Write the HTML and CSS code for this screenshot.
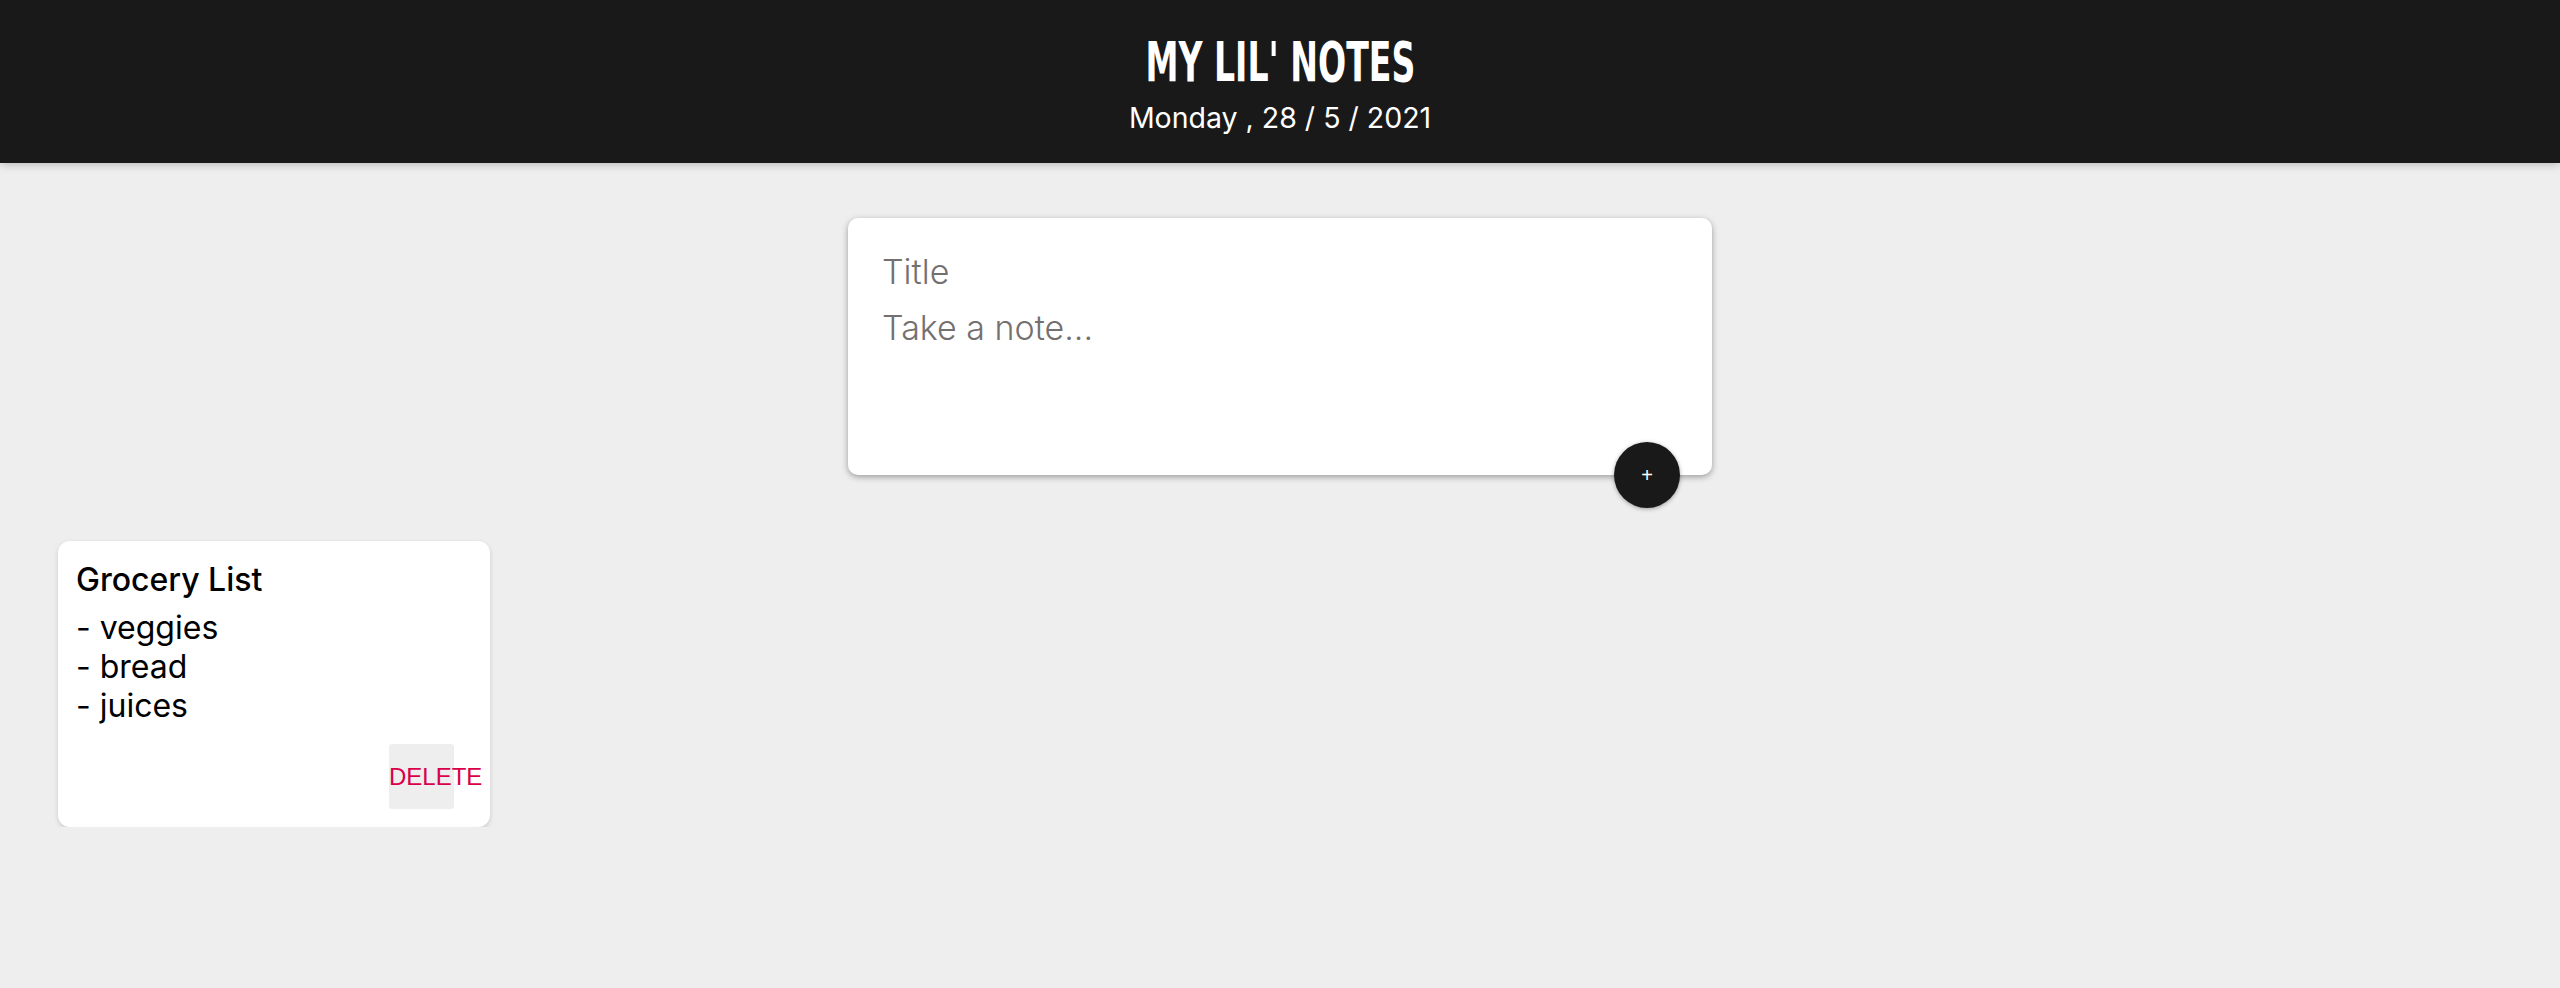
FILE: index.html
```html
<!DOCTYPE html>
<html lang="en">
<head>
<meta charset="utf-8">
<title>My Lil' Notes</title>
<link rel="stylesheet" href="styles.css">
</head>
<body>
<header class="header">
  <h1 class="brand"><span class="brand-text">MY LIL' NOTES</span></h1>
  <p class="date">Monday , 28 / 5 / 2021</p>
</header>
<main class="main">
  <form class="create-note">
    <input class="create-title" type="text" name="title" placeholder="Title">
    <textarea class="create-content" name="content" rows="3" placeholder="Take a note..."></textarea>
    <button class="add-btn" type="button">+</button>
  </form>
  <section class="notes">
    <article class="note">
      <h2 class="note-title">Grocery List</h2>
      <p class="note-body">- veggies<br>- bread<br>- juices</p>
      <div class="note-actions">
        <button class="delete-btn" type="button">DELETE</button>
      </div>
    </article>
  </section>
</main>
</body>
</html>
```
FILE: styles.css
```css
* { box-sizing: border-box; }
html, body { margin: 0; padding: 0; }
body {
  background: #eeeeee;
  font-family: Inter, "Open Sans", sans-serif;
}
.header {
  height: 163px;
  background: #191919;
  box-shadow: 0 0 10px rgba(0,0,0,0.3);
  display: flex;
  flex-direction: column;
  align-items: center;
  color: #fff;
  padding-top: 32px;
}
.brand {
  margin: 0;
  font-family: "DejaVu Sans Condensed", sans-serif;
  font-weight: 700;
  font-size: 55px;
  line-height: 60px;
  letter-spacing: 0;
}
.brand-text { display: inline-block; transform: scaleX(0.67); }
.date {
  margin: 9px 0 0;
  font-size: 28.5px;
  line-height: 34px;
  font-weight: 400;
}
.main { padding: 55px 0 0; }
.create-note {
  position: relative;
  width: 864px;
  height: 257px;
  margin: 0 auto;
  background: #fff;
  border-radius: 10px;
  box-shadow: 0 2px 6px rgba(0,0,0,0.35);
  padding: 27px 34px 0;
  display: flex;
  flex-direction: column;
}
.create-title, .create-content {
  border: none;
  outline: none;
  font-family: inherit;
  font-size: 34px;
  color: #333;
  padding: 0;
  resize: none;
  background: transparent;
  font-weight: 300;
}
.create-title { height: 54px; line-height: 54px; }
.create-content { line-height: 46px; height: 140px; margin-top: 6px; }
.create-title::placeholder, .create-content::placeholder { color: #757070; }
.add-btn {
  position: absolute;
  right: 32px;
  bottom: -33px;
  width: 66px;
  height: 66px;
  border-radius: 50%;
  border: none;
  background: #191919;
  color: #fff;
  font-size: 20px;
  box-shadow: 0 1px 4px rgba(0,0,0,0.35);
  padding: 0;
}
.notes {
  display: flex;
  flex-wrap: wrap;
  padding: 66px 58px 0;
}
.note {
  width: 432px;
  height: 286px;
  background: #fff;
  border-radius: 12px;
  box-shadow: 0 2px 5px rgba(0,0,0,0.15);
  padding: 19px 36px 18px 18px;
  display: flex;
  flex-direction: column;
}
.note-title {
  margin: 0;
  font-size: 32px;
  font-weight: 500;
  line-height: 40px;
  color: #000;
}
.note-body {
  margin: 8px 0 0;
  font-size: 32px;
  line-height: 39px;
  color: #000;
}
.note-actions {
  margin-top: auto;
  display: flex;
  justify-content: flex-end;
}
.delete-btn {
  width: 65px;
  height: 65px;
  padding: 0;
  border: none;
  border-radius: 3px;
  background: #eeeeee;
  color: #d9004a;
  font-family: "Liberation Sans", Arial, sans-serif;
  font-size: 24px;
  white-space: nowrap;
  text-align: left;
  overflow: visible;
}
```
